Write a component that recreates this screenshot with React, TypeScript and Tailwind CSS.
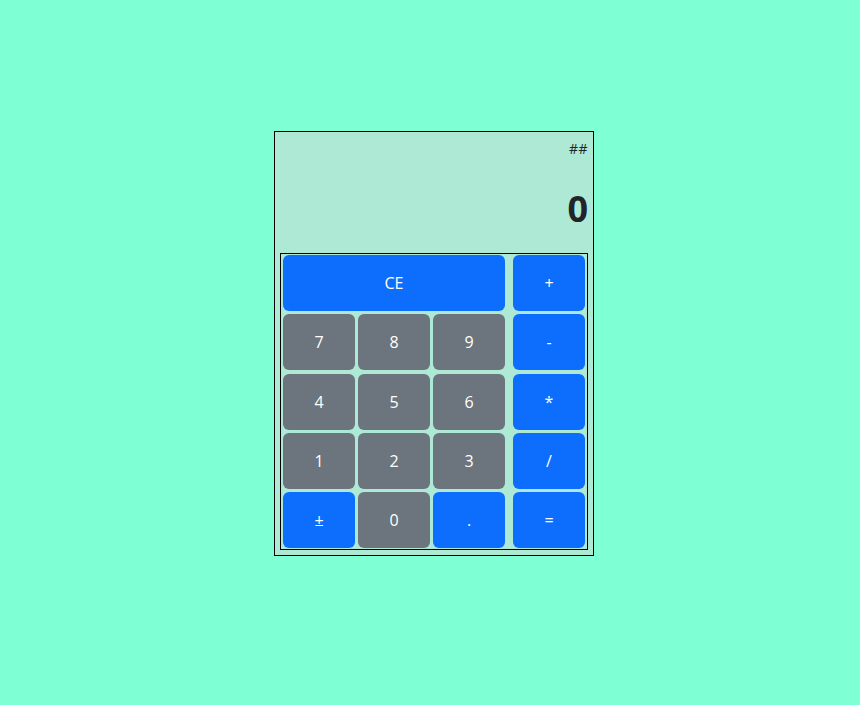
import React from "react";

type B = { label: string; kind: "p" | "s"; span?: boolean };

const rows: B[][] = [
  [{ label: "CE", kind: "p", span: true }, { label: "+", kind: "p" }],
  [{ label: "7", kind: "s" }, { label: "8", kind: "s" }, { label: "9", kind: "s" }, { label: "-", kind: "p" }],
  [{ label: "4", kind: "s" }, { label: "5", kind: "s" }, { label: "6", kind: "s" }, { label: "*", kind: "p" }],
  [{ label: "1", kind: "s" }, { label: "2", kind: "s" }, { label: "3", kind: "s" }, { label: "/", kind: "p" }],
  [{ label: "±", kind: "p" }, { label: "0", kind: "s" }, { label: ".", kind: "p" }, { label: "=", kind: "p" }],
];

function Btn({ b }: { b: B }) {
  return (
    <button
      className={
        "h-[56px] rounded-[6px] text-white text-[16px] flex items-center justify-center " +
        (b.kind === "p" ? "bg-[#0d6efd]" : "bg-[#6c757d]")
      }
    >
      {b.label}
    </button>
  );
}

export default function App() {
  return (
    <div
      className="w-[860px] h-[705px] bg-[#7fffd4] pt-[131px] pl-[274px]"
      style={{ fontFamily: '"Open Sans", "Noto Sans", sans-serif' }}
    >
      <div className="w-[320px] h-[425px] border border-black bg-[#ade9d5] flex flex-col">
        <div className="h-[121px] flex flex-col items-end pr-[5px] text-[#212529]">
          <div className="text-[14px] leading-[20px] mt-[7px] tracking-[0.5px]">##</div>
          <div className="text-[36px] font-bold leading-[44px] mt-[28px]">0</div>
        </div>
        <div className="mx-[5px] h-[297px] border border-black pl-[2px] pt-[1px] flex flex-col gap-[3.25px]">
          {rows.map((r, i) => {
            const left = r.slice(0, r.length - 1);
            const last = r[r.length - 1];
            return (
              <div key={i} className="flex">
                <div className="w-[222px] grid grid-cols-3 gap-[3px]">
                  {left.map((b, j) => (
                    <div key={j} className={b.span ? "col-span-3 grid" : "grid"}>
                      <Btn b={b} />
                    </div>
                  ))}
                </div>
                <div className="ml-[8px] w-[72px] grid">
                  <Btn b={last} />
                </div>
              </div>
            );
          })}
        </div>
      </div>
    </div>
  );
}
